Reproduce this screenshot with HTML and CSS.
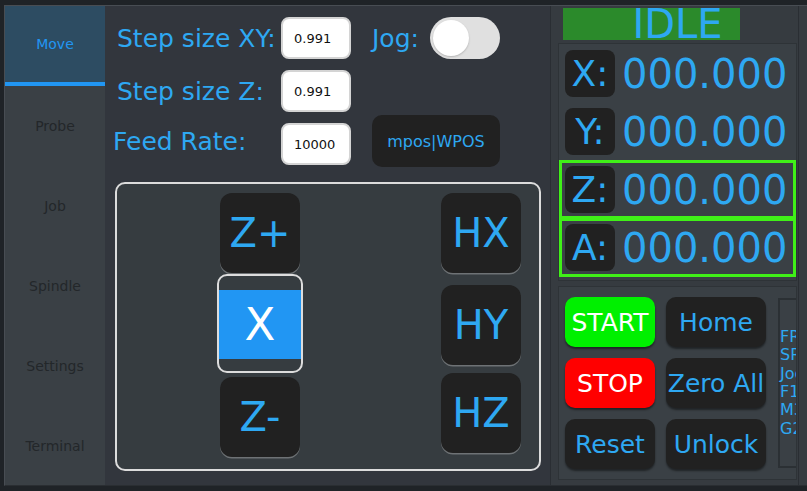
FILE: index.html
```html
<!DOCTYPE html>
<html>
<head>
<meta charset="utf-8">
<title>CNC Pendant</title>
<link rel="stylesheet" href="styles.css">
</head>
<body>
<div class="app">
  <div class="screen">
    <nav class="sidebar">
      <div class="tab active">Move</div>
      <div class="tab">Probe</div>
      <div class="tab">Job</div>
      <div class="tab">Spindle</div>
      <div class="tab">Settings</div>
      <div class="tab">Terminal</div>
    </nav>

    <main class="main">
      <div class="row r1">
        <span class="lbl ind">Step size XY:</span>
        <input class="inp" type="text" value="0.991">
        <span class="lbl jog">Jog:</span>
        <div class="toggle"><span class="knob"></span></div>
      </div>
      <div class="row r2">
        <span class="lbl ind">Step size Z:</span>
        <input class="inp" type="text" value="0.991">
      </div>
      <div class="row r3">
        <span class="lbl">Feed Rate:</span>
        <input class="inp low" type="text" value="10000">
        <button class="mode">mpos|WPOS</button>
      </div>

      <div class="jogframe">
        <div class="col cl">
          <button class="jbtn">Z+</button>
          <div class="xsel"><div class="band">X</div></div>
          <button class="jbtn zm">Z-</button>
        </div>
        <div class="col cr">
          <button class="jbtn">HX</button>
          <button class="jbtn hy">HY</button>
          <button class="jbtn hz">HZ</button>
        </div>
      </div>
    </main>

    <aside class="right">
      <div class="status">IDLE</div>
      <div class="dro">
        <div class="axis"><span class="alabel">X:</span><span class="aval">000.000</span></div>
        <div class="axis"><span class="alabel">Y:</span><span class="aval">000.000</span></div>
        <div class="axis hl"><span class="alabel">Z:</span><span class="aval">000.000</span></div>
        <div class="axis hl"><span class="alabel">A:</span><span class="aval">000.000</span></div>
      </div>
      <div class="ctl">
        <div class="btns">
          <button class="cbtn start">START</button>
          <button class="cbtn">Home</button>
          <button class="cbtn stop">STOP</button>
          <button class="cbtn">Zero All</button>
          <button class="cbtn">Reset</button>
          <button class="cbtn">Unlock</button>
        </div>
        <div class="info">
          <div>FRO: 100%</div>
          <div>SRO: 100%</div>
          <div>Jog: 0.991</div>
          <div>F10000</div>
          <div>M3</div>
          <div>G21</div>
        </div>
      </div>
    </aside>

    <div class="scroll"></div>
  </div>
</div>
</body>
</html>
```

FILE: styles.css
```css
html, body {
  margin: 0;
  padding: 0;
}
body {
  background: #1f2327;
  font-family: "DejaVu Sans", sans-serif;
}
button, input {
  font-family: "DejaVu Sans", sans-serif;
}

.app {
  width: 807px;
  height: 491px;
  box-sizing: border-box;
  padding: 5px 0 5px 4px;
  display: flex;
}
.screen {
  flex: 1;
  display: flex;
  border-top: 1px solid #484d53;
  border-left: 1px solid #484d53;
  border-bottom: 1px solid #2a2e32;
  overflow: hidden;
}

/* sidebar */
.sidebar {
  width: 100px;
  flex-shrink: 0;
  background: #3a4045;
}
.tab {
  height: 80px;
  box-sizing: border-box;
  display: flex;
  align-items: center;
  justify-content: center;
  font-size: 14px;
  color: #23272a;
}
.tab.active {
  background: #2d4c62;
  color: #2196f3;
  border-bottom: 4px solid #2196f3;
}

/* main */
.main {
  width: 445px;
  flex-shrink: 0;
  box-sizing: border-box;
  background: #32363d;
  padding-left: 8px;
}
.row {
  display: flex;
  align-items: center;
  height: 42px;
}
.r1 { margin-top: 11px; }
.r2 { margin-top: 11px; }
.r3 { margin-top: 3px; height: 52px; }
.lbl {
  width: 168px;
  box-sizing: border-box;
  font-size: 25px;
  color: #2ea8f2;
  white-space: nowrap;
}
.ind { padding-left: 4px; }
.inp {
  width: 70px;
  height: 42px;
  box-sizing: border-box;
  border: 2px solid #d4d4d4;
  border-radius: 8px;
  background: #fff;
  color: #111;
  font-size: 13px;
  padding: 0 0 0 11px;
  margin: 0;
  outline: none;
}
.r3 .inp {
  align-self: flex-end;
  margin-bottom: 2px;
}
.jog {
  width: 58px;
  margin-left: 21px;
}
.toggle {
  width: 70px;
  height: 42px;
  box-sizing: border-box;
  padding: 3px;
  border-radius: 21px;
  background: #e0e0e0;
}
.knob {
  display: block;
  width: 36px;
  height: 36px;
  border-radius: 50%;
  background: #fff;
  box-shadow: 0 1px 2px rgba(0, 0, 0, 0.2);
}
.mode {
  margin-left: 21px;
  width: 128px;
  height: 52px;
  border: none;
  border-radius: 10px;
  background: #212121;
  color: #2ea8f2;
  font-size: 16px;
  padding: 0;
}

/* jog pad */
.jogframe {
  margin: 15px 0 0 2px;
  width: 426px;
  height: 289px;
  box-sizing: border-box;
  border: 2px solid #dcdcdc;
  border-radius: 10px;
  background: #363c40;
  display: grid;
  grid-template-columns: 86px 80px;
  column-gap: 138px;
  align-items: start;
  align-content: start;
  padding: 9px 0 0 100px;
}
.col {
  display: flex;
  flex-direction: column;
  align-items: center;
}
.jbtn {
  width: 80px;
  height: 80px;
  flex-shrink: 0;
  margin: 0;
  border: none;
  border-radius: 12px;
  background: #212121;
  color: #2ea8f2;
  font-size: 40px;
  padding: 0;
  box-shadow: 0 1.5px 0 rgba(255, 255, 255, 0.28);
}
.zm { margin-top: 4px; }
.hy { margin-top: 12px; }
.hz { margin-top: 8px; }
.xsel {
  margin-top: 1px;
  width: 86px;
  height: 99px;
  box-sizing: border-box;
  border: 2px solid #dddddd;
  border-radius: 10px;
  padding-top: 14px;
}
.band {
  height: 69px;
  background: #2196f3;
  color: #fff;
  font-size: 45px;
  display: flex;
  align-items: center;
  justify-content: center;
}

/* right column */
.right {
  width: 248px;
  flex-shrink: 0;
  box-sizing: border-box;
  border-left: 1px solid #2a2e33;
  background: #363b40;
  padding: 2px 1px 0 7px;
}
.status {
  height: 32px;
  line-height: 32px;
  text-align: center;
  font-size: 40px;
  color: #2ea8f2;
  background: linear-gradient(#2b8a2b, #2b8a2b) 5px 0 / 177px 100% no-repeat;
  margin-bottom: 3px;
}
.dro {
  height: 238px;
  box-sizing: border-box;
  border: 1px solid #2e3337;
  background: #3a4045;
  margin-bottom: 5px;
}
.axis {
  display: flex;
  align-items: center;
  height: 59px;
  box-sizing: border-box;
  border: 3px solid transparent;
}
.axis + .axis { margin-top: -1px; }
.axis.hl { border-color: #40f018; }
.alabel {
  width: 50px;
  height: 47px;
  line-height: 47px;
  margin-left: 3px;
  border-radius: 8px;
  background: #212121;
  color: #2ea8f2;
  font-size: 36px;
  text-align: center;
}
.aval {
  margin-left: 7px;
  font-size: 40px;
  color: #2ea8f2;
}

.ctl {
  height: 194px;
  box-sizing: border-box;
  border: 1px solid #2e3337;
  background: #3a4045;
  display: flex;
  overflow: hidden;
}
.btns {
  display: grid;
  grid-template-columns: 90px 100px;
  grid-auto-rows: 50px;
  gap: 11px;
  margin: 10px 0 0 6px;
  align-content: start;
  flex-shrink: 0;
}
.cbtn {
  border: none;
  border-radius: 10px;
  background: #212121;
  color: #2ea8f2;
  font-size: 25px;
  padding: 0;
  white-space: nowrap;
  box-shadow: 0 2px 2px rgba(0, 0, 0, 0.45);
}
.cbtn.start { background: #00f000; color: #fff; }
.cbtn.stop { background: #ff0000; color: #fff; }
.info {
  margin: 11px 0 0 12px;
  width: 80px;
  height: 170px;
  flex-shrink: 0;
  box-sizing: border-box;
  border: 2px solid #2b3034;
  display: flex;
  flex-direction: column;
  justify-content: center;
  font-size: 16px;
  line-height: 18.4px;
  color: #2ea8f2;
  white-space: nowrap;
}

.scroll {
  width: 9px;
  flex-shrink: 0;
  box-sizing: border-box;
  border-left: 1px solid #2a2e33;
  background: #363b40;
}
```
